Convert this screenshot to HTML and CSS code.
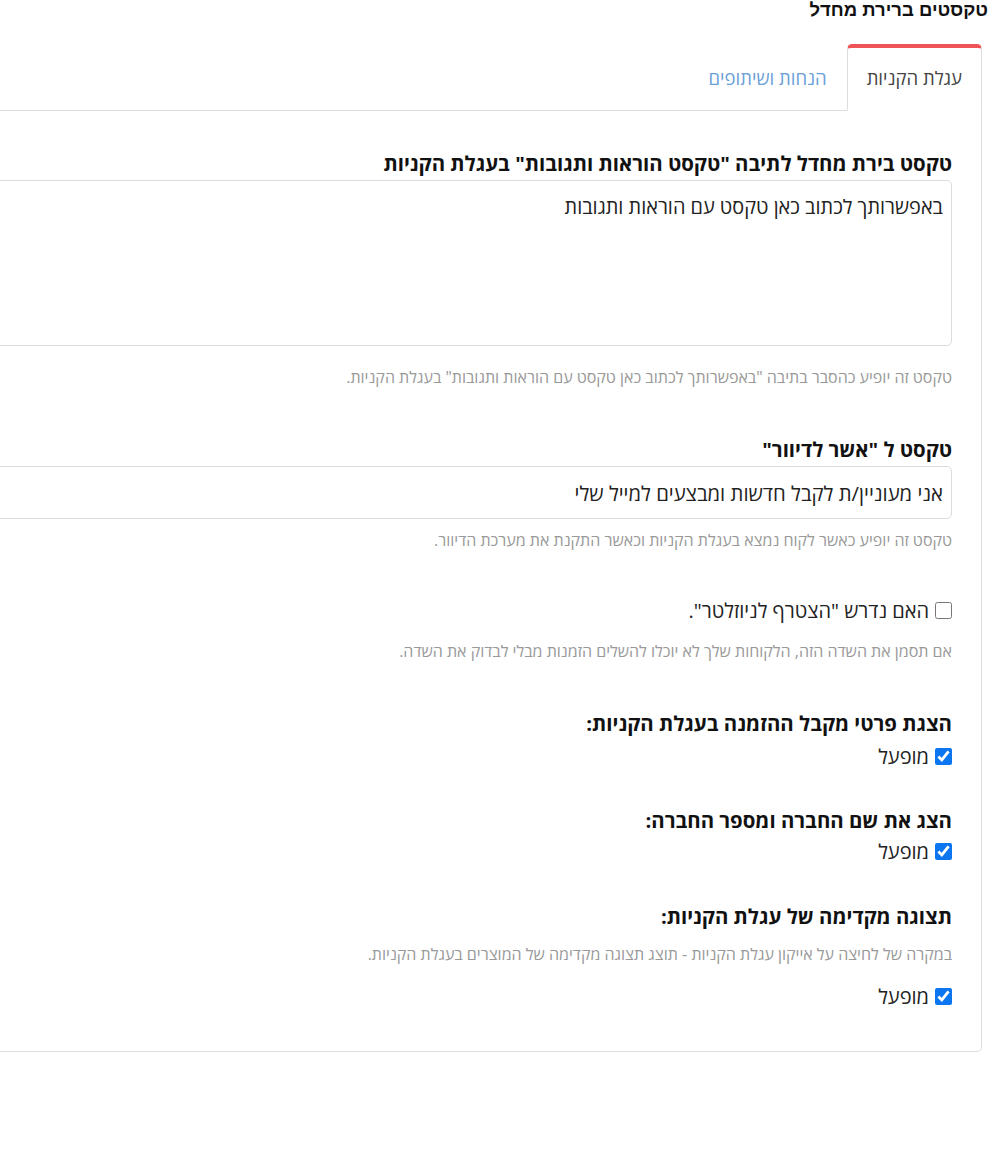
FILE: index.html
```html
<!DOCTYPE html>
<html lang="he" dir="rtl">
<head>
<meta charset="utf-8">
<title>טקסטים ברירת מחדל</title>
<link rel="stylesheet" href="styles.css">
</head>
<body>
<h3 class="page-title">טקסטים ברירת מחדל</h3>
<div class="tabs-wrap">
  <ul class="tabs">
    <li class="tab active">עגלת הקניות</li>
    <li class="tab">הנחות ושיתופים</li>
  </ul>
  <div class="panel">
    <div class="group g-textarea">
      <label class="field-label">טקסט בירת מחדל לתיבה "טקסט הוראות ותגובות" בעגלת הקניות</label>
      <textarea class="field-textarea">באפשרותך לכתוב כאן טקסט עם הוראות ותגובות</textarea>
      <p class="help help-1">טקסט זה יופיע כהסבר בתיבה "באפשרותך לכתוב כאן טקסט עם הוראות ותגובות" בעגלת הקניות.</p>
    </div>
    <div class="group g-input">
      <label class="field-label">טקסט ל "אשר לדיוור"</label>
      <input class="field-input" type="text" value="אני מעוניין/ת לקבל חדשות ומבצעים למייל שלי">
      <p class="help help-2">טקסט זה יופיע כאשר לקוח נמצא בעגלת הקניות וכאשר התקנת את מערכת הדיוור.</p>
    </div>
    <div class="group g-news">
      <label class="check-row"><input type="checkbox" class="check"> האם נדרש "הצטרף לניוזלטר".</label>
      <p class="help help-3">אם תסמן את השדה הזה, הלקוחות שלך לא יוכלו להשלים הזמנות מבלי לבדוק את השדה.</p>
    </div>
    <div class="group g-details">
      <label class="field-label">הצגת פרטי מקבל ההזמנה בעגלת הקניות:</label>
      <label class="check-row"><input type="checkbox" class="check" checked> מופעל</label>
    </div>
    <div class="group g-company">
      <label class="field-label">הצג את שם החברה ומספר החברה:</label>
      <label class="check-row"><input type="checkbox" class="check" checked> מופעל</label>
    </div>
    <div class="group g-preview">
      <label class="field-label">תצוגה מקדימה של עגלת הקניות:</label>
      <p class="help help-4">במקרה של לחיצה על אייקון עגלת הקניות - תוצג תצוגה מקדימה של המוצרים בעגלת הקניות.</p>
      <label class="check-row"><input type="checkbox" class="check" checked> מופעל</label>
    </div>
  </div>
</div>
</body>
</html>
```

FILE: styles.css
```css
html, body {
  margin: 0;
  padding: 0;
  background: #ffffff;
  overflow-x: hidden;
}
body {
  font-family: "Open Sans", "Liberation Sans", Arial, sans-serif;
  color: #222;
}
.page-title {
  margin: 0;
  padding: 0 6px 0 0;
  font-family: "Liberation Sans", Arial, sans-serif;
  font-size: 18.5px;
  line-height: 20px;
  font-weight: bold;
  color: #111;
}
.tabs-wrap {
  width: 1400px;
  margin: 24px 12px 0 0;
}
.tabs {
  list-style: none;
  margin: 0;
  padding: 0;
  display: flex;
  border-bottom: 1px solid #dddddd;
}
.tab {
  padding: 0 19px;
  height: 66px;
  line-height: 60px;
  font-size: 18.5px;
  color: #6a9fd8;
  border: 1px solid transparent;
  border-top-width: 4px;
  margin-bottom: -1px;
  box-sizing: border-box;
}
.tab.active {
  color: #444;
  background: #fff;
  border-color: #dddddd;
  border-top-color: #ef5457;
  border-bottom-color: #fff;
  border-radius: 5px 5px 0 0;
  height: 67px;
}
.panel {
  border: 1px solid #dddddd;
  border-top: none;
  border-radius: 0 0 5px 5px;
  padding: 39px 29px 41px 29px;
}
.group { margin: 0; }
.field-label {
  display: block;
  font-size: 20.4px;
  line-height: 27px;
  font-weight: bold;
  color: #111;
  margin-bottom: 4px;
}
.field-textarea, .field-input {
  display: block;
  box-sizing: border-box;
  width: 100%;
  border: 1px solid #dcdcdc;
  border-radius: 5px;
  font-family: inherit;
  font-size: 19.9px;
  color: #222;
  background: #fff;
  padding: 12px 8px;
  margin: 0;
  resize: none;
}
.field-textarea {
  height: 166px;
  line-height: 27px;
}
.field-input {
  height: 53px;
  line-height: 27px;
  font-size: 20.3px;
}
.g-textarea .field-label, .g-input .field-label { margin-bottom: 3px; }
.help {
  margin: 0;
  font-size: 16px;
  line-height: 20px;
  color: #999;
}
.help-1 { margin-top: 21px; }
.help-2 { margin-top: 11px; }
.help-3 { margin-top: 17px; }
.help-4 { margin-top: 14px; }
.check-row {
  display: flex;
  align-items: center;
  gap: 6px;
  font-size: 20px;
  line-height: 27px;
  color: #222;
}
.check {
  width: 17px;
  height: 17px;
  margin: 0;
  accent-color: #0b76f0;
}
.g-input { margin-top: 49px; }
.g-news { margin-top: 47px; }
.g-details { margin-top: 49px; }
.g-details .field-label { margin-bottom: 6px; }
.g-company { margin-top: 37px; }
.g-company .field-label { margin-bottom: 4px; }
.g-preview { margin-top: 38px; }
.g-preview .help-4 { margin-top: 14px; }
.g-preview .check-row { margin-top: 19px; }
```
